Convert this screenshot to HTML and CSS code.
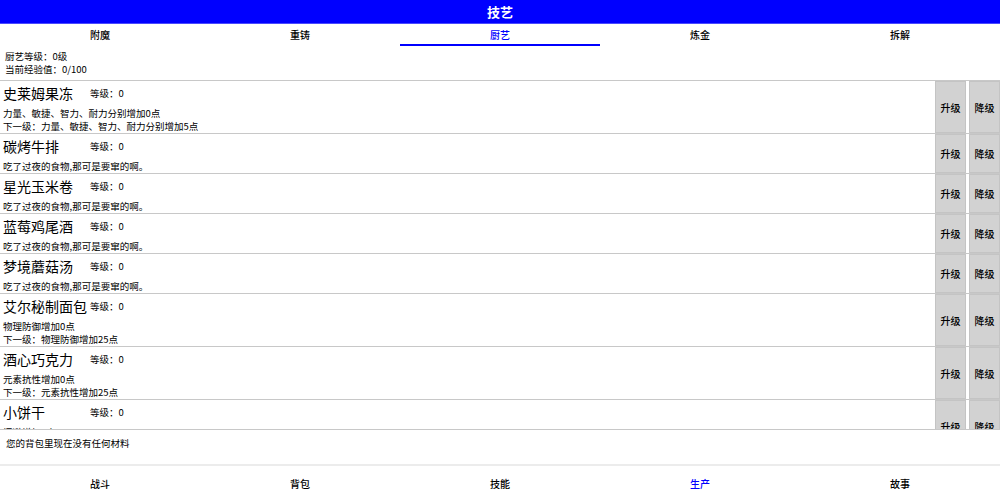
FILE: index.html
```html
<!DOCTYPE html>
<html lang="zh">
<head>
<meta charset="utf-8">
<link rel="stylesheet" href="styles.css">
</head>
<body>
<div class="app">
  <header class="topbar">技艺</header>
  <nav class="tabs">
    <div class="tab">附魔</div>
    <div class="tab">重铸</div>
    <div class="tab active">厨艺</div>
    <div class="tab">炼金</div>
    <div class="tab">拆解</div>
  </nav>
  <div class="info">
    <div>厨艺等级：0级</div>
    <div>当前经验值：0/100</div>
  </div>
  <div class="list">
    <div class="item">
      <div class="body">
        <div class="head"><span class="name">史莱姆果冻</span><span class="lv">等级：0</span></div>
        <div class="descs">
          <div class="desc">力量、敏捷、智力、耐力分别增加0点</div>
          <div class="desc">下一级：力量、敏捷、智力、耐力分别增加5点</div>
        </div>
      </div>
      <div class="btns"><div class="btn">升级</div><div class="btn">降级</div></div>
    </div>
    <div class="item">
      <div class="body">
        <div class="head"><span class="name">碳烤牛排</span><span class="lv">等级：0</span></div>
        <div class="descs"><div class="desc">吃了过夜的食物,那可是要窜的啊。</div></div>
      </div>
      <div class="btns"><div class="btn">升级</div><div class="btn">降级</div></div>
    </div>
    <div class="item">
      <div class="body">
        <div class="head"><span class="name">星光玉米卷</span><span class="lv">等级：0</span></div>
        <div class="descs"><div class="desc">吃了过夜的食物,那可是要窜的啊。</div></div>
      </div>
      <div class="btns"><div class="btn">升级</div><div class="btn">降级</div></div>
    </div>
    <div class="item">
      <div class="body">
        <div class="head"><span class="name">蓝莓鸡尾酒</span><span class="lv">等级：0</span></div>
        <div class="descs"><div class="desc">吃了过夜的食物,那可是要窜的啊。</div></div>
      </div>
      <div class="btns"><div class="btn">升级</div><div class="btn">降级</div></div>
    </div>
    <div class="item">
      <div class="body">
        <div class="head"><span class="name">梦境蘑菇汤</span><span class="lv">等级：0</span></div>
        <div class="descs"><div class="desc">吃了过夜的食物,那可是要窜的啊。</div></div>
      </div>
      <div class="btns"><div class="btn">升级</div><div class="btn">降级</div></div>
    </div>
    <div class="item">
      <div class="body">
        <div class="head"><span class="name">艾尔秘制面包</span><span class="lv">等级：0</span></div>
        <div class="descs">
          <div class="desc">物理防御增加0点</div>
          <div class="desc">下一级：物理防御增加25点</div>
        </div>
      </div>
      <div class="btns"><div class="btn">升级</div><div class="btn">降级</div></div>
    </div>
    <div class="item">
      <div class="body">
        <div class="head"><span class="name">酒心巧克力</span><span class="lv">等级：0</span></div>
        <div class="descs">
          <div class="desc">元素抗性增加0点</div>
          <div class="desc">下一级：元素抗性增加25点</div>
        </div>
      </div>
      <div class="btns"><div class="btn">升级</div><div class="btn">降级</div></div>
    </div>
    <div class="item">
      <div class="body">
        <div class="head"><span class="name">小饼干</span><span class="lv">等级：0</span></div>
        <div class="descs">
          <div class="desc">闪避增加0点</div>
          <div class="desc">下一级：闪避增加25点</div>
        </div>
      </div>
      <div class="btns"><div class="btn">升级</div><div class="btn">降级</div></div>
    </div>
  </div>
  <div class="materials">您的背包里现在没有任何材料</div>
  <nav class="bottom">
    <div class="navitem">战斗</div>
    <div class="navitem">背包</div>
    <div class="navitem">技能</div>
    <div class="navitem active">生产</div>
    <div class="navitem">故事</div>
  </nav>
</div>
</body>
</html>
```
FILE: styles.css
```css
html, body {
  margin: 0;
  padding: 0;
  background: #fff;
}
body {
  font-family: "Noto Sans CJK SC", "Noto Sans", sans-serif;
  font-size: 10px;
  color: #000;
}
.app {
  width: 1000px;
  height: 501px;
  display: flex;
  flex-direction: column;
  overflow: hidden;
}
.topbar {
  height: 23px;
  background: #0000ff;
  border-bottom: 1px solid #4a4aff;
  color: #fff;
  font-size: 13px;
  font-weight: bold;
  display: flex;
  align-items: center;
  justify-content: center;
  flex: none;
}
.tabs {
  display: grid;
  grid-template-columns: repeat(5, 1fr);
  height: 22px;
  flex: none;
}
.tab {
  display: flex;
  align-items: center;
  justify-content: center;
  font-weight: 500;
  border-bottom: 2px solid transparent;
}
.tab.active {
  color: #0000ff;
  border-bottom-color: #0000ff;
}
.info {
  padding: 4px 5px 4px;
  line-height: 13px;
  height: 26px;
  font-size: 9.5px;
  flex: none;
}
.list {
  height: 350px;
  overflow: hidden;
  flex: none;
  border-bottom: 1px solid #c8c8c8;
  box-sizing: border-box;
}
.item {
  display: flex;
  border-top: 1px solid #c8c8c8;
}
.body {
  flex: 1;
  padding-left: 3px;
}
.head {
  height: 24px;
  box-sizing: border-box;
  padding-bottom: 1px;
  display: flex;
  align-items: center;
}
.name {
  font-size: 14px;
  width: 84px;
  margin-right: 3px;
  white-space: nowrap;
}
.lv {
  font-size: 9.5px;
}
.descs {
  padding-top: 2px;
}
.desc {
  line-height: 13px;
  font-size: 9.5px;
  white-space: nowrap;
}
.btns {
  display: flex;
  gap: 3px;
}
.btn {
  width: 29px;
  background: #d2d2d2;
  border: 1px solid #c4c4c4;
  display: flex;
  align-items: center;
  justify-content: center;
  font-weight: 500;
}
.materials {
  height: 36px;
  padding: 6px 6px 0;
  box-sizing: border-box;
  line-height: 14px;
  font-size: 9.5px;
  flex: none;
  border-bottom: 2px solid #ececec;
}
.bottom {
  display: grid;
  grid-template-columns: repeat(5, 1fr);
  flex: 1;
}
.navitem {
  display: flex;
  align-items: center;
  justify-content: center;
  font-weight: 500;
}
.navitem.active {
  color: #0000ff;
}
```
